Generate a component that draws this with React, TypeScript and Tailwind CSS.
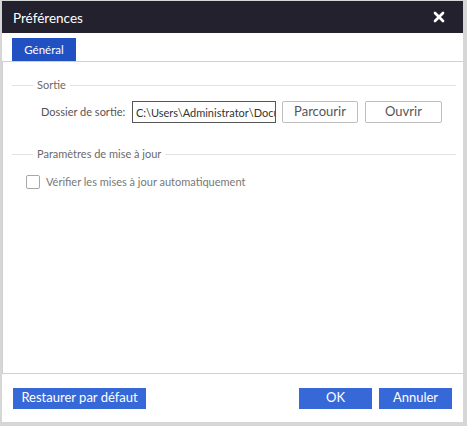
import { X } from "lucide-react";

function Legend({ label }: { label: string }) {
  return (
    <div className="flex items-center h-[14px]">
      <div className="w-[21px] h-px bg-[#e2e2e2]" />
      <span className="px-[4px] text-[#6a6a6a]">{label}</span>
      <div className="flex-1 h-px bg-[#e2e2e2]" />
    </div>
  );
}

export default function App() {
  return (
    <div
      className="w-[467px] h-[426px] bg-white border-l-2 border-t border-r-4 border-b-4 border-[#d6d6d6] flex flex-col text-[11px] text-[#444]"
      style={{ fontFamily: 'Lato, "Noto Sans", sans-serif' }}
    >
      <div className="h-[32px] bg-[#22212d] flex items-center justify-between pl-[11px] pr-[16px] shrink-0">
        <span className="text-white text-[13.5px] mt-[2px]">Préférences</span>
        <X className="w-[16px] h-[16px] text-white" strokeWidth={4} />
      </div>

      <div className="h-[28px] pt-[5px] pl-[10px] shrink-0">
        <div className="w-[64px] h-[23px] bg-[#2150c3] text-white text-[11.5px] flex items-center justify-center">
          Général
        </div>
      </div>

      <div className="h-[313px] border-t border-b border-l border-[#d0d0d0] shrink-0 pt-[16px] pl-[9px] pr-[7px]">
        <Legend label="Sortie" />

        <div className="flex items-center mt-[9px] pl-[29px] h-[22px]">
          <span className="text-[#555] w-[91px] whitespace-nowrap">Dossier de sortie:</span>
          <input
            readOnly
            value="C:\Users\Administrator\Documents"
            className="w-[144px] h-[22px] border border-[#555] pl-[3px] text-[#333] outline-none"
          />
          <button className="ml-[6px] w-[76px] h-[22px] border border-[#bdbdbd] rounded-[2px] bg-white text-[#555] text-[13px]">
            Parcourir
          </button>
          <button className="ml-[7px] w-[77px] h-[22px] border border-[#bdbdbd] rounded-[2px] bg-white text-[#555] text-[13px]">
            Ouvrir
          </button>
        </div>

        <div className="mt-[24px]">
          <Legend label="Paramètres de mise à jour" />
        </div>

        <label className="flex items-center mt-[13px] pl-[14px] text-[#777]">
          <span className="w-[14px] h-[14px] border border-[#a8a8a8] rounded-[2px] bg-white" />
          <span className="ml-[6px]">Vérifier les mises à jour automatiquement</span>
        </label>
      </div>

      <div className="flex-1 flex items-center px-[11px]">
        <button className="w-[133px] h-[21px] bg-[#3668d8] text-white text-[13px]">Restaurer par défaut</button>
        <div className="flex-1" />
        <button className="w-[73px] h-[21px] bg-[#3668d8] text-white text-[13px]">OK</button>
        <button className="ml-[7px] w-[73px] h-[21px] bg-[#3668d8] text-white text-[13px]">Annuler</button>
      </div>
    </div>
  );
}
